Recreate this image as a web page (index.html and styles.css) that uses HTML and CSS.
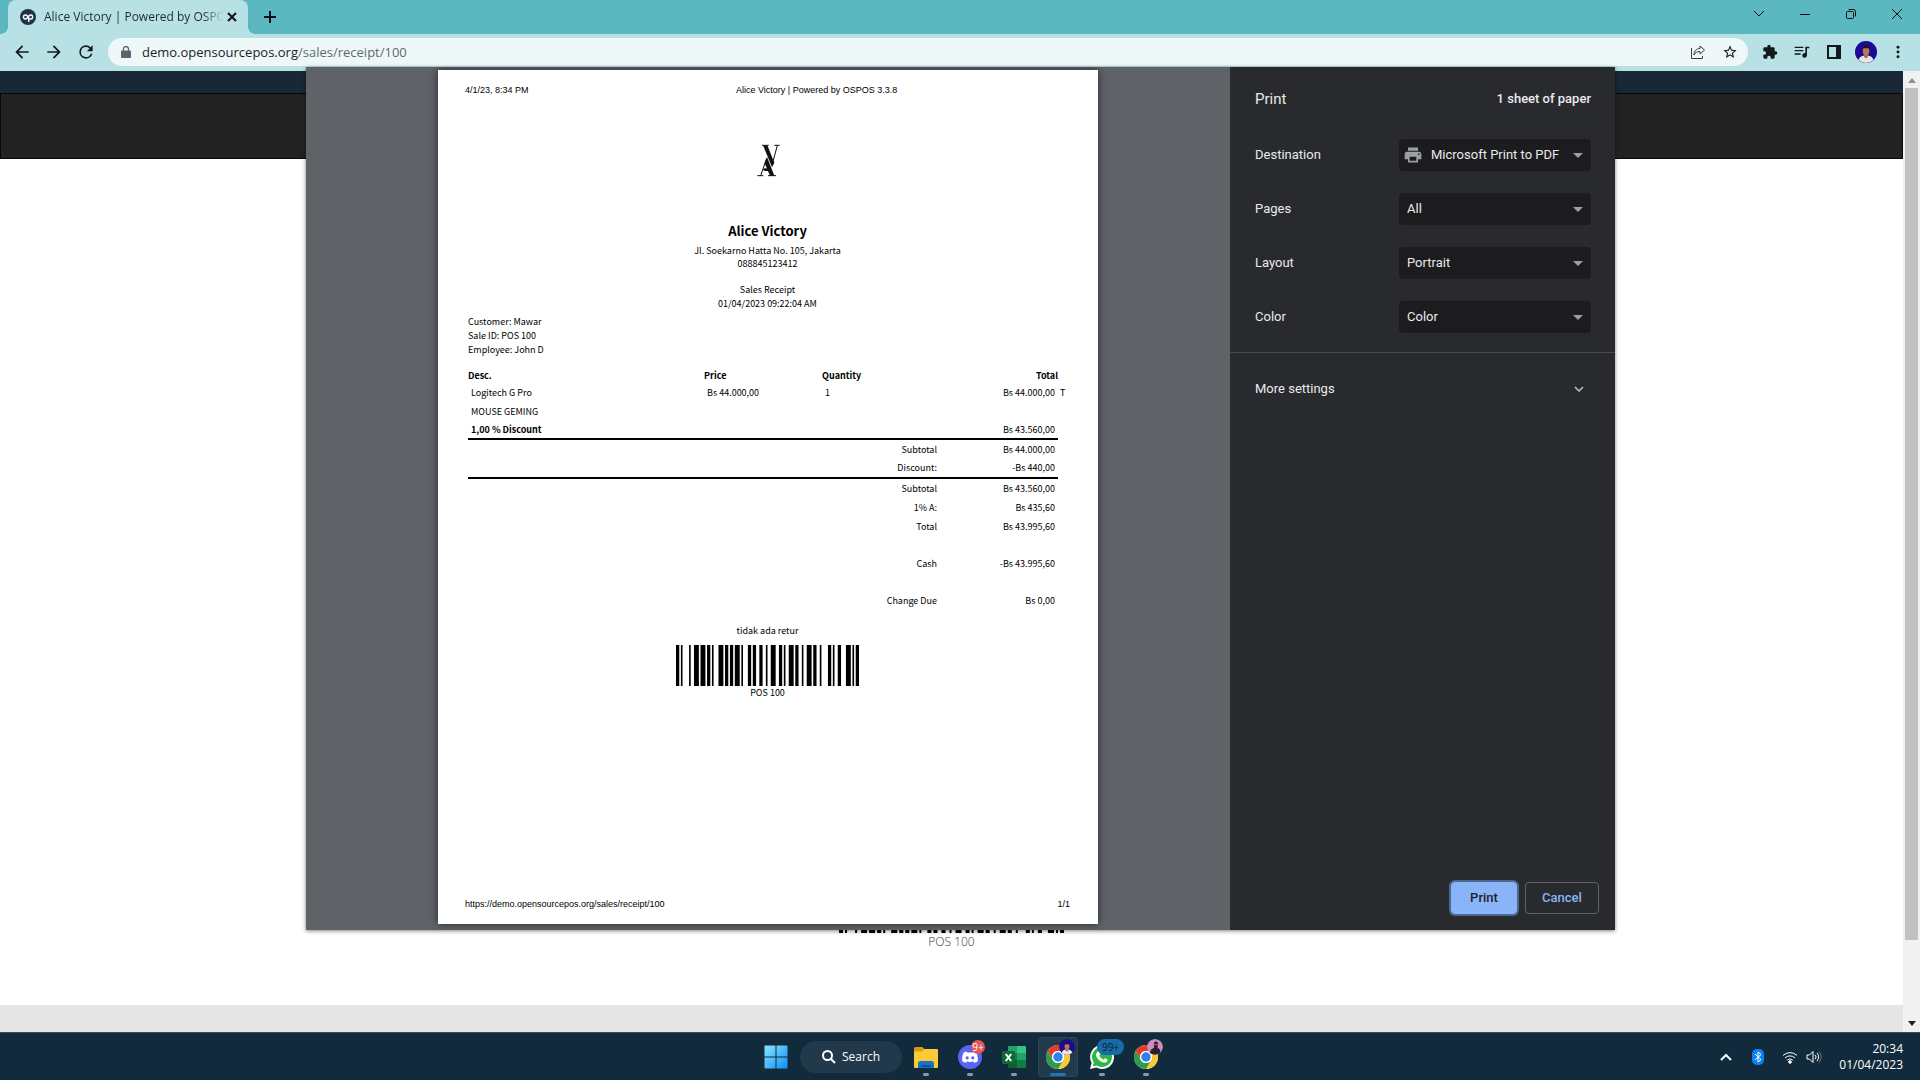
FILE: index.html
```
<!DOCTYPE html>
<html lang="en">
<head>
<meta charset="utf-8">
<meta name="viewport" content="width=device-width, initial-scale=1">
<title>Alice Victory | Powered by OSPOS 3.3.8</title>
<link rel="stylesheet" href="styles.css">
</head>
<body>
<svg class="defs" aria-hidden="true">
  <defs>
    <symbol id="barcode" viewBox="0 0 112 10" preserveAspectRatio="none">
      <path d="M0 0h2v10h-2zM3 0h1v10h-1zM8 0h1v10h-1zM11 0h3v10h-3zM15 0h3v10h-3zM19 0h2v10h-2zM22 0h1v10h-1zM26 0h3v10h-3zM30 0h2v10h-2zM33 0h2v10h-2zM36 0h3v10h-3zM40 0h1v10h-1zM44 0h2v10h-2zM47 0h2v10h-2zM51 0h2v10h-2zM55 0h1v10h-1zM58 0h3v10h-3zM63 0h2v10h-2zM66 0h1v10h-1zM69 0h3v10h-3zM73 0h2v10h-2zM77 0h1v10h-1zM80 0h3v10h-3zM84 0h2v10h-2zM88 0h1v10h-1zM93 0h2v10h-2zM96 0h1v10h-1zM99 0h2v10h-2zM104 0h3v10h-3zM108 0h1v10h-1zM110 0h2v10h-2z"/>
    </symbol>
    <symbol id="chrome" viewBox="0 0 24 24">
      <circle cx="12" cy="12" r="12" fill="#fff"/>
      <path fill="#e33b2e" d="M1.6 6A12 12 0 0 1 22.400 6H12a6 6 0 0 0-5.200 9z"/>
      <path fill="#fcc934" d="M22.400 6A12 12 0 0 1 12 24l5.200-9A6 6 0 0 0 12 6z"/>
      <path fill="#2a9c4a" d="M12 24A12 12 0 0 1 1.600 6l5.200 9a6 6 0 0 0 10.400 0z"/>
      <circle cx="12" cy="12" r="6" fill="#fff"/>
      <circle cx="12" cy="12" r="4.700" fill="#2f80ed"/>
    </symbol>
    <symbol id="face" viewBox="0 0 22 22">
      <circle cx="11" cy="11" r="11" fill="#1c0a96"/>
      <path fill="#ece6e4" d="M3.500 19c1-3 3-4 5.500-4.500h4c2.500.5 4.500 1.500 5.500 4.500a11 11 0 0 1-15 0z"/>
      <path fill="#a9704f" d="M9 12h4v4l-2 1.500-2-1.500z"/>
      <ellipse cx="11" cy="10" rx="3.300" ry="4.200" fill="#b57b58"/>
      <path fill="#20130f" d="M7.400 9.500C7 6.500 8.500 4.700 11 4.700s4 1.800 3.600 4.800l-.8-2.200H8.200z"/>
    </symbol>
  </defs>
</svg>

<div class="browser">
  <header class="tabstrip">
    <div class="tab">
      <svg class="favicon" viewBox="0 0 16 16"><circle cx="8" cy="8" r="8" fill="#1f3349"/><circle cx="5.500" cy="8" r="2" fill="none" stroke="#fff" stroke-width="1.400"/><path d="M8.700 13V7.600A2 2 0 1 1 10.700 10H9.500" fill="none" stroke="#fff" stroke-width="1.400"/></svg>
      <span class="tab-title">Alice Victory | Powered by OSPOS</span>
      <button class="tab-close" aria-label="Close tab"><svg viewBox="0 0 10 10"><path d="M1 1l8 8M9 1L1 9"/></svg></button>
    </div>
    <button class="new-tab" aria-label="New tab"><svg viewBox="0 0 12 12"><path d="M6 0v12M0 6h12"/></svg></button>
    <div class="window-controls">
      <button aria-label="Search tabs"><svg viewBox="0 0 12 12"><path d="M1 3l5 5 5-5"/></svg></button>
      <button aria-label="Minimize"><svg viewBox="0 0 12 12"><path d="M1 6.500h10"/></svg></button>
      <button aria-label="Restore"><svg viewBox="0 0 12 12"><rect x="1.500" y="3.500" width="7" height="7" rx="1"/><path d="M3.500 1.500h5a2 2 0 0 1 2 2v5"/></svg></button>
      <button aria-label="Close"><svg viewBox="0 0 12 12"><path d="M1 1l10 10M11 1L1 11"/></svg></button>
    </div>
  </header>

  <nav class="toolbar">
    <button aria-label="Back"><svg viewBox="0 0 24 24"><path d="M20 11H7.830l5.590-5.590L12 4l-8 8 8 8 1.410-1.410L7.830 13H20z"/></svg></button>
    <button aria-label="Forward"><svg viewBox="0 0 24 24"><path d="M12 4l-1.410 1.410L16.170 11H4v2h12.170l-5.580 5.590L12 20l8-8z"/></svg></button>
    <button aria-label="Reload"><svg viewBox="0 0 24 24"><path d="M17.650 6.350A7.960 7.960 0 0 0 12 4a8 8 0 1 0 7.730 10h-2.080A6 6 0 1 1 12 6c1.660 0 3.140.69 4.220 1.780L13 11h7V4z"/></svg></button>
    <div class="omnibox">
      <svg class="lock" viewBox="0 0 10 12"><path fill="#5f6368" d="M1 4.500h8a1 1 0 0 1 1 1V11a1 1 0 0 1-1 1H1a1 1 0 0 1-1-1V5.500a1 1 0 0 1 1-1z"/><path fill="none" stroke="#5f6368" stroke-width="1.300" d="M2.500 5V3a2.500 2.500 0 0 1 5 0v2"/></svg>
      <a class="url" href="#receipt">demo.opensourcepos.org<span>/sales/receipt/100</span></a>
      <button aria-label="Share"><svg class="line" viewBox="0 0 16 16"><path d="M1.500 4v10.500h11V12M10 2l4.500 4-4.500 4V7.500C7 7.500 5 8.500 4 11c0-4 2.500-6.500 6-6.500z"/></svg></button>
      <button aria-label="Bookmark"><svg viewBox="0 0 24 24"><path d="M22 9.240l-7.190-.62L12 2 9.190 8.630 2 9.240l5.460 4.730L5.820 21 12 17.270 18.180 21l-1.630-7.030zM12 15.400l-3.760 2.270 1-4.280-3.320-2.880 4.380-.38L12 6.100l1.710 4.040 4.380.38-3.320 2.880 1 4.280z"/></svg></button>
    </div>
    <button aria-label="Extensions"><svg viewBox="0 0 24 24"><path d="M20.500 11H19V7a2 2 0 0 0-2-2h-4V3.500a2.500 2.500 0 0 0-5 0V5H4a2 2 0 0 0-2 2v3.800h1.500a2.700 2.700 0 0 1 0 5.400H2V20a2 2 0 0 0 2 2h3.800v-1.500a2.700 2.700 0 0 1 5.400 0V22H17a2 2 0 0 0 2-2v-4h1.500a2.500 2.500 0 0 0 0-5z"/></svg></button>
    <button aria-label="Media"><svg viewBox="0 0 24 24"><path d="M1 4h13v2H1zM1 9h13v2H1zM1 14h9v2H1zM17 4h6v2.500h-3.500V17a3.500 3.500 0 1 1-2.500-3.300z"/></svg></button>
    <button aria-label="Side panel"><svg viewBox="0 0 14 14"><path fill-rule="evenodd" d="M0 0h14v14H0zM2 2v10h7V2z"/></svg></button>
    <button class="profile" aria-label="Profile"><svg><use href="#face"/></svg></button>
    <button aria-label="Menu"><svg viewBox="0 0 24 24"><circle cx="12" cy="5" r="2.200"/><circle cx="12" cy="12" r="2.200"/><circle cx="12" cy="19" r="2.200"/></svg></button>
  </nav>

  <div class="viewport">
    <div class="site">
      <div class="topbar"></div>
      <div class="navbar"></div>
      <div class="site-receipt">
        <svg class="site-barcode"><use href="#barcode"/></svg>
        <div>POS 100</div>
      </div>
      <div class="site-footer"></div>
    </div>
    <div class="scrollbar">
      <svg viewBox="0 0 8 5"><path fill="#8d8d8d" d="M4 0l4 5H0z"/></svg>
      <div class="thumb"></div>
      <svg viewBox="0 0 8 5"><path fill="#222" d="M4 5l4-5H0z"/></svg>
    </div>
  </div>

  <section class="print-dialog" role="dialog" aria-label="Print">
    <div class="preview">
      <article class="sheet" id="receipt">
        <div class="sheet-head"><span>4/1/23, 8:34 PM</span><span>Alice Victory | Powered by OSPOS 3.3.8</span></div>
        <div class="receipt">
          <svg class="logo" viewBox="0 0 96 108">
            <path d="M30 10h20M67 10h16M16 101h18M48 101h24" stroke="#111" stroke-width="3"/>
            <path d="M33 10h13L67 62l-7 14z"/>
            <path d="M76 10L61 66M44 49L26 101" stroke="#111" stroke-width="3"/>
            <path d="M45 45L67 101H54L38 64z"/>
            <path d="M32 82c6-5 12-4 17 0v5H38z"/>
          </svg>
          <h1>Alice Victory</h1>
          <div class="company">Jl. Soekarno Hatta No. 105, Jakarta<br>088845123412</div>
          <div class="sale">Sales Receipt<br>01/04/2023 09:22:04 AM</div>
          <div class="customer">Customer: Mawar<br>Sale ID: POS 100<br>Employee: John D</div>
          <table>
            <colgroup><col class="c-desc"><col class="c-num"><col class="c-num"><col class="c-num"><col></colgroup>
            <thead><tr><th>Desc.</th><th>Price</th><th>Quantity</th><th class="r">Total</th><td></td></tr></thead>
            <tbody>
              <tr><td>Logitech G Pro</td><td>Bs 44.000,00</td><td>1</td><td class="r">Bs 44.000,00</td><td>T</td></tr>
              <tr><td>MOUSE GEMING</td><td></td><td></td><td></td><td></td></tr>
              <tr class="ruled"><td><b>1,00 % Discount</b></td><td></td><td></td><td class="r">Bs 43.560,00</td><td></td></tr>
              <tr><td class="r" colspan="3">Subtotal</td><td class="r">Bs 44.000,00</td><td></td></tr>
              <tr class="ruled tall"><td class="r" colspan="3">Discount:</td><td class="r">-Bs 440,00</td><td></td></tr>
              <tr><td class="r" colspan="3">Subtotal</td><td class="r">Bs 43.560,00</td><td></td></tr>
              <tr><td class="r" colspan="3">1% A:</td><td class="r">Bs 435,60</td><td></td></tr>
              <tr><td class="r" colspan="3">Total</td><td class="r">Bs 43.995,60</td><td></td></tr>
              <tr class="blank"><td colspan="5"></td></tr>
              <tr><td class="r" colspan="3">Cash</td><td class="r">-Bs 43.995,60</td><td></td></tr>
              <tr class="blank"><td colspan="5"></td></tr>
              <tr><td class="r" colspan="3">Change Due</td><td class="r">Bs 0,00</td><td></td></tr>
            </tbody>
          </table>
          <div class="policy">tidak ada retur</div>
          <svg class="sale-barcode"><use href="#barcode"/></svg>
          <div>POS 100</div>
        </div>
        <div class="sheet-foot"><span>https://demo.opensourcepos.org/sales/receipt/100</span><span>1/1</span></div>
      </article>
    </div>

    <form class="settings">
      <div class="settings-head"><h2>Print</h2><span>1 sheet of paper</span></div>
      <div class="fields">
        <div class="field">
          <label for="destination">Destination</label>
          <div class="control">
            <svg class="printer" viewBox="0 0 24 24"><path d="M19 8H5a3 3 0 0 0-3 3v6h4v4h12v-4h4v-6a3 3 0 0 0-3-3zm-3 11H8v-5h8zm3-7a1 1 0 1 1 0-2 1 1 0 0 1 0 2zm-1-9H6v4h12z"/></svg>
            <select id="destination" class="with-icon"><option>Microsoft Print to PDF</option></select>
          </div>
        </div>
        <div class="field"><label for="pages">Pages</label><div class="control"><select id="pages"><option>All</option></select></div></div>
        <div class="field"><label for="layout">Layout</label><div class="control"><select id="layout"><option>Portrait</option></select></div></div>
        <div class="field"><label for="color">Color</label><div class="control"><select id="color"><option>Color</option></select></div></div>
      </div>
      <button type="button" class="more">More settings<svg viewBox="0 0 10 6"><path d="M1 1l4 4 4-4"/></svg></button>
      <div class="actions"><button type="button" class="primary">Print</button><button type="button">Cancel</button></div>
    </form>
  </section>
</div>

<footer class="taskbar">
  <div class="apps">
    <button class="app" aria-label="Start"><svg viewBox="0 0 24 24"><defs><linearGradient id="win" x2="1" y2="1"><stop stop-color="#8be3ff"/><stop offset="1" stop-color="#0a91f5"/></linearGradient></defs><path fill="url(#win)" d="M1 .5h10.500V11.500H.5V1zM12.500.5H23l.5.500v10.500h-11zM.5 12.500h11v11H1l-.5-.5zM12.500 12.500h11V23l-.5.500H12.500z"/></svg></button>
    <button class="search"><svg viewBox="0 0 14 14"><circle cx="5.500" cy="5.500" r="4.500"/><path d="M9 9l4 4"/></svg>Search</button>
    <button class="app open" aria-label="File Explorer"><svg viewBox="0 0 24 24"><path fill="#d99a13" d="M0 3.500A1.500 1.500 0 0 1 1.500 2h7L11 4.500V9H0z"/><path fill="#fcc937" d="M0 6.500h8L10.500 4H23a1 1 0 0 1 1 1v17a1 1 0 0 1-1 1H1a1 1 0 0 1-1-1z"/><path fill="#1673c4" d="M4 23v-4.500A2.500 2.500 0 0 1 6.500 16h11a2.500 2.500 0 0 1 2.500 2.500V23z"/><path fill="#0b539b" d="M7.500 20h9v2h-9z"/></svg></button>
    <button class="app open" aria-label="Discord"><svg viewBox="0 0 24 24"><circle cx="12" cy="12" r="12" fill="#5865f2"/><path fill="#fff" d="M8.500 6.500c-1.500.3-2.500.8-3 1.200C4.500 10 4 12.500 4.200 16c1 1 2.300 1.500 3.800 1.800l.8-1.300c2 .6 4.400.6 6.400 0l.8 1.300c1.500-.3 2.800-.8 3.800-1.800.2-3.500-.3-6-1.300-8.300-.5-.4-1.500-.9-3-1.200l-.6 1h-5.800z"/><circle cx="9.200" cy="12.800" r="1.600" fill="#5865f2"/><circle cx="14.800" cy="12.800" r="1.600" fill="#5865f2"/></svg><span class="badge red">9+</span></button>
    <button class="app open" aria-label="Excel"><svg viewBox="0 0 24 24"><path fill="#21a366" d="M6 2a1 1 0 0 1 1-1h8v7H6z"/><path fill="#33c481" d="M15 1h8a1 1 0 0 1 1 1v6h-9z"/><path fill="#107c41" d="M6 8h9v7H6z"/><path fill="#21a366" d="M15 8h9v7h-9z"/><path fill="#185c37" d="M6 15h9v8H7a1 1 0 0 1-1-1z"/><path fill="#107c41" d="M15 15h9v7a1 1 0 0 1-1 1h-8z"/><rect y="6" width="13" height="13" rx="1" fill="#0b6b37"/><path d="M3.800 9l5.400 7M9.200 9l-5.400 7" stroke="#fff" stroke-width="2"/></svg></button>
    <button class="app open active" aria-label="Chrome"><svg viewBox="0 0 24 24"><use href="#chrome"/></svg><svg class="badge pic"><use href="#face"/></svg></button>
    <button class="app open" aria-label="WhatsApp"><svg viewBox="0 0 24 24"><path fill="#fff" d="M12 0a12 12 0 1 1-5.600 22.600L0 24l1.600-6.200A12 12 0 0 1 12 0z"/><path fill="#2cb742" d="M12 2a10 10 0 1 1-5.300 18.500L2.800 21.300l1-3.700A10 10 0 0 1 12 2z"/><path fill="#fff" d="M8 6.500c.7-.3 1.200 0 1.500.8l.7 1.700c0 .8-.8 1-1 1.600 1 2 2.300 3.200 4.200 4 .7-.2 1-1.300 1.600-1.400l2.300 1.100c.4.400.2 1.500-.2 2.100-2 2-4.600 1.200-7-.4-2-1.500-3.800-3.500-4.100-6 0-1.500.8-3 2-3.500z"/></svg><span class="badge wide">99+</span></button>
    <button class="app open" aria-label="Chrome, second profile"><svg viewBox="0 0 24 24"><use href="#chrome"/></svg><svg class="badge pic" viewBox="0 0 16 16"><circle cx="8" cy="8" r="8" fill="#c98fc4"/><path fill="#2a1f2f" d="M3 14c0-3 2-4.500 4-5V4.500a2 2 0 0 1 4 0l-.5 4.500c2 .5 3 2 3 4.500A8 8 0 0 1 3 14z"/><path fill="#d8456b" d="M6.500 5h5v1.300h-5z"/></svg></button>
  </div>
  <div class="tray">
    <svg class="t-up" viewBox="0 0 12 8"><path d="M1 7l5-5 5 5"/></svg>
    <svg class="t-bt" viewBox="0 0 12 16"><rect width="12" height="16" rx="5" fill="#0a84f0"/><path d="M3 5l6 5.500L6 13V3l3 2.500L3 11" fill="none" stroke="#fff"/></svg>
    <svg class="t-net" viewBox="0 0 16 14"><path d="M1 5.500a10 10 0 0 1 14 0M3 8a7 7 0 0 1 10 0M5.200 10.200a4 4 0 0 1 5.600 0"/><circle cx="8" cy="12" r="1.300" fill="#fff"/></svg>
    <svg class="t-vol" viewBox="0 0 16 14"><path d="M1 5h2.500L7 1.500v11L3.500 9H1zM9 4.800a3 3 0 0 1 0 4.400M11 3a6 6 0 0 1 0 8"/><path opacity=".35" d="M13 1.500a8 8 0 0 1 0 11"/></svg>
    <div class="clock">20:34<br>01/04/2023</div>
  </div>
</footer>
</body>
</html>
```
FILE: styles.css
```
* { box-sizing: border-box; }

body {
  margin: 0;
  min-height: 100vh;
  display: flex;
  flex-direction: column;
  background: #fff;
  font: 13px/16px Roboto, sans-serif;
  color: #000;
}

button {
  margin: 0;
  padding: 0;
  border: 0;
  background: none;
  font: inherit;
  color: inherit;
  display: flex;
  align-items: center;
  justify-content: center;
}

.defs { position: absolute; width: 0; height: 0; }

.browser {
  position: relative;
  flex: 1;
  display: flex;
  flex-direction: column;
}

/* Tab strip */
.tabstrip {
  height: 34px;
  display: flex;
  align-items: stretch;
  padding-left: 8px;
  background: #5bb8c1;
}
.tab {
  position: relative;
  width: 240px;
  display: flex;
  align-items: center;
  padding: 0 8px 0 12px;
  background: #b7e1e5;
  border-radius: 8px 8px 0 0;
  font: 12px/16px "Open Sans", sans-serif;
  color: #1d2a33;
}
.tab::before, .tab::after {
  content: "";
  position: absolute;
  bottom: 0;
  width: 8px;
  height: 8px;
}
.tab::before { right: 100%; background: radial-gradient(circle at 0 0, transparent 8px, #b7e1e5 8px); }
.tab::after { left: 100%; background: radial-gradient(circle at 100% 0, transparent 8px, #b7e1e5 8px); }
.favicon { width: 16px; height: 16px; margin-right: 8px; flex: none; }
.tab-title {
  flex: 1;
  min-width: 0;
  overflow: hidden;
  white-space: nowrap;
  -webkit-mask-image: linear-gradient(to right, #000 88%, transparent);
  mask-image: linear-gradient(to right, #000 88%, transparent);
}
.tab-close { width: 16px; height: 16px; }
.tab-close svg { width: 10px; height: 10px; }
.new-tab { width: 28px; margin-left: 8px; }
.new-tab svg { width: 12px; height: 12px; }
.tabstrip button svg { fill: none; stroke: #101010; stroke-width: 2; }
.window-controls { display: flex; margin-left: auto; padding-bottom: 6px; }
.window-controls button { width: 46px; }
.tabstrip .window-controls svg { width: 12px; height: 12px; stroke-width: 1; }

/* Toolbar */
.toolbar {
  height: 37px;
  display: flex;
  align-items: center;
  padding: 0 6px 1px;
  background: #b7e1e5;
}
.toolbar button { width: 32px; height: 28px; flex: none; }
.toolbar button svg { width: 20px; height: 20px; fill: #15191b; }
.toolbar button[aria-label="Extensions"] svg,
.toolbar button[aria-label="Bookmark"] svg,
.toolbar button[aria-label="Media"] svg,
.toolbar button[aria-label="Menu"] svg { width: 16px; height: 16px; }
.toolbar button[aria-label="Side panel"] svg { width: 14px; height: 14px; }
.toolbar .profile svg { width: 22px; height: 22px; }
.omnibox {
  flex: 1;
  min-width: 0;
  height: 28px;
  margin: 0 6px;
  padding: 0 2px 0 13px;
  display: flex;
  align-items: center;
  border-radius: 14px;
  background: #eef8f9;
}
.omnibox .lock { width: 10px; height: 12px; margin-right: 11px; }
.url {
  flex: 1;
  min-width: 0;
  font: 13px/20px "Open Sans", sans-serif;
  color: #1b2226;
  text-decoration: none;
}
.url span { color: #5f6a6e; }
.toolbar .omnibox .line { width: 16px; height: 16px; fill: none; stroke: #333b3e; }

/* Page behind the dialog */
.viewport { flex: 1; display: flex; }
.site { flex: 1; display: flex; flex-direction: column; }
.topbar { height: 22px; background: #182836; }
.navbar { height: 66px; background: #222; border: 1px solid #080808; }
.site-receipt {
  flex: 1;
  display: flex;
  flex-direction: column;
  justify-content: flex-end;
  align-items: center;
  padding-bottom: 54px;
  font: 12px/18px "Open Sans", sans-serif;
  font-weight: 300;
  color: #333b44;
}
.site-barcode { width: 225px; height: 50px; fill: #000; }
.site-footer { height: 27px; background: #e5e5e5; }
.scrollbar {
  width: 17px;
  display: flex;
  flex-direction: column;
  align-items: center;
  padding: 7px 2px 6px;
  background: #f1f1f1;
}
.scrollbar svg { width: 8px; height: 5px; }
.scrollbar .thumb { flex: 1; width: 13px; margin: 5px 0 81px; background: #c1c1c1; }

/* Print dialog */
.print-dialog {
  position: absolute;
  inset: 67px 305px 102px 306px;
  display: flex;
  background: #292a2d;
  box-shadow: 0 1px 4px rgba(0, 0, 0, .5);
}
.preview {
  flex: 1;
  display: flex;
  justify-content: center;
  padding: 3px 0 6px;
  background: #5f6368;
  overflow: hidden;
}
.sheet {
  width: 660px;
  padding: 15px 28px 15px 27px;
  display: flex;
  flex-direction: column;
  background: #fff;
  box-shadow: 0 0 8px rgba(0, 0, 0, .6);
}
.sheet-head, .sheet-foot {
  font: 9px/10px "Liberation Sans", sans-serif;
}
.sheet-head { display: grid; grid-template-columns: 271px 1fr; }
.sheet-foot { display: flex; justify-content: space-between; }
.receipt {
  flex: 1;
  display: flex;
  flex-direction: column;
  align-items: center;
  font: 9px/14px "Noto Sans CJK SC", sans-serif;
  text-align: center;
  padding: 47px 3px 0;
}
.logo { width: 32px; height: 36px; fill: #111; }
.receipt h1 { margin: 43px 0 3px; font-size: 13px; line-height: 20px; }
.company { line-height: 13px; }
.sale { margin-top: 13px; }
.customer { align-self: flex-start; margin-top: 4px; text-align: left; }
.receipt table {
  width: 100%;
  margin-top: 12px;
  table-layout: fixed;
  border-collapse: separate;
  border-spacing: 0;
  text-align: left;
}
.c-desc { width: 236px; }
.c-num { width: 118px; }
th, td { padding: 0; height: 19px; line-height: 14px; white-space: nowrap; }
thead th, thead td { height: 14px; }
tbody td { padding: 0 3px; }
tbody td:nth-child(5) { padding: 0 2px; }
.r { text-align: right; }
.ruled td:not(:last-child) { border-bottom: 2px solid #000; }
.tall td { height: 20px; }
.blank td { height: 18px; }
.policy { margin-top: 14px; }
.sale-barcode { width: 183px; height: 41px; margin: 7px 0 0; }

/* Settings column */
.settings {
  width: 385px;
  display: flex;
  flex-direction: column;
  color: #e8eaed;
}
.settings-head {
  display: flex;
  align-items: center;
  justify-content: space-between;
  height: 64px;
  padding: 0 24px 0 25px;
  font-weight: 500;
}
.settings-head h2 { margin: 0; font-size: 15px; font-weight: 400; }
.fields {
  display: grid;
  gap: 22px;
  padding: 8px 24px 19px 25px;
  border-bottom: 1px solid #494a4d;
}
.field { display: flex; align-items: center; justify-content: space-between; }
.control { position: relative; width: 192px; }
select {
  display: block;
  width: 100%;
  height: 32px;
  padding: 0 28px 0 8px;
  border: 0;
  border-radius: 4px;
  appearance: none;
  background: #1c1c1e;
  color: #e8eaed;
  font: inherit;
}
.with-icon { padding-left: 32px; }
.control::after {
  content: "";
  position: absolute;
  right: 8px;
  top: 14px;
  border: 5px solid transparent;
  border-top-color: #9aa0a6;
  border-bottom: 0;
}
.printer { position: absolute; left: 4px; top: 6px; width: 20px; height: 20px; fill: #9aa0a6; }
.more { justify-content: space-between; height: 72px; padding: 0 31px 0 25px; }
.more svg { width: 10px; height: 6px; fill: none; stroke: #bdc1c6; stroke-width: 1.500; }
.actions { display: flex; gap: 8px; margin-top: auto; padding: 16px; justify-content: flex-end; }
.actions button {
  width: 74px;
  height: 32px;
  border: 1px solid #5f6368;
  border-radius: 4px;
  color: #8ab4f8;
  font-weight: 500;
}
.actions .primary {
  width: 66px;
  background: #8ab4f8;
  border-color: #8ab4f8;
  color: #202124;
  box-shadow: 0 0 0 2px #4d6794;
}

/* Taskbar */
.taskbar {
  height: 48px;
  display: grid;
  grid-template-columns: 1fr auto 1fr;
  align-items: center;
  background: #112b3d;
  border-top: 1px solid #3a4d5a;
  color: #fff;
  font: 12px/16px "Open Sans", sans-serif;
}
.apps { grid-column: 2; display: flex; gap: 4px; padding-left: 2px; }
.app { position: relative; width: 40px; height: 40px; border-radius: 4px; }
.app > svg:first-child { width: 24px; height: 24px; }
.app.open::after {
  content: "";
  position: absolute;
  bottom: 1px;
  width: 6px;
  height: 3px;
  border-radius: 2px;
  background: #8f9ba4;
}
.app.active { background: #213a4c; box-shadow: inset 0 0 0 1px #2c4455; }
.app.active::after { width: 16px; background: #2075ba; }
.badge {
  position: absolute;
  top: 3px;
  left: 21px;
  height: 14px;
  min-width: 14px;
  border-radius: 8px;
  font-size: 10px;
  line-height: 14px;
}
.red { background: #e25757; }
.wide { top: 2px; left: 15px; width: 27px; height: 16px; line-height: 16px; background: #176ba8; color: #0b1c28; }
.pic { top: 2px; width: 16px; height: 16px; }
.search {
  width: 102px;
  height: 32px;
  margin: 4px 0;
  gap: 6px;
  border-radius: 16px;
  background: #22394b;
}
.search svg { width: 14px; height: 14px; fill: none; stroke: #fff; stroke-width: 2; }
.tray {
  display: flex;
  align-items: center;
  justify-content: flex-end;
  padding-right: 17px;
}
.tray svg { flex: none; fill: none; stroke: #fff; }
.t-up { width: 12px; height: 8px; margin-right: 20px; stroke-width: 2; }
.t-bt { width: 12px; height: 16px; margin-right: 18px; }
.t-bt rect { stroke: none; }
.t-net { width: 16px; height: 14px; margin-right: 8px; }
.t-vol { width: 16px; height: 14px; margin-right: 17px; }
.clock { text-align: right; }
```
